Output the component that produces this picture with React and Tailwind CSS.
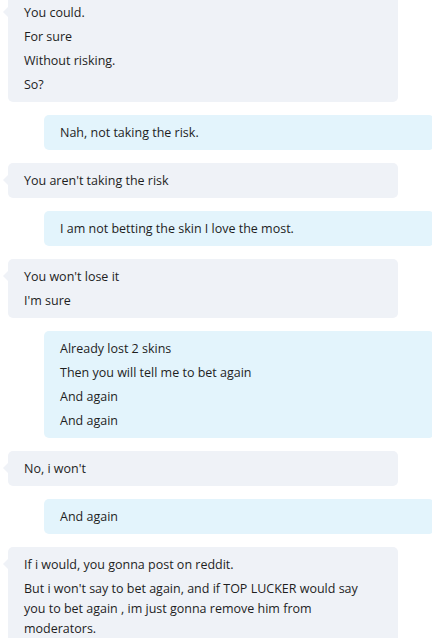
import React from "react";

const messages = [
  { me: false, lines: ["You could.", "For sure", "Without risking.", "So?"] },
  { me: true, lines: ["Nah, not taking the risk."] },
  { me: false, lines: ["You aren't taking the risk"] },
  { me: true, lines: ["I am not betting the skin I love the most."] },
  { me: false, lines: ["You won't lose it", "I'm sure"] },
  { me: true, lines: ["Already lost 2 skins", "Then you will tell me to bet again", "And again", "And again"] },
  { me: false, lines: ["No, i won't"] },
  { me: true, lines: ["And again"] },
  {
    me: false,
    lines: [
      "If i would, you gonna post on reddit.",
      "But i won't say to bet again, and if TOP LUCKER would say you to bet again , im just gonna remove him from moderators.",
    ],
  },
];

function Bubble({ me, lines }) {
  return (
    <div
      className={`relative w-[390px] shrink-0 rounded-[5px] pl-4 pr-4 pt-2 pb-[7px] flex flex-col gap-1 ${
        me ? "ml-[44px] bg-[#e3f4fc]" : "ml-[8px] bg-[#eff2f7]"
      }`}
    >
      {!me && (
        <div className="absolute left-[-5px] top-[12px] w-0 h-0 border-y-[5px] border-y-transparent border-r-[5px] border-r-[#eff2f7]" />
      )}
      {lines.map((l, i) => (
        <p key={i} className="leading-5">
          {l}
        </p>
      ))}
    </div>
  );
}

export default function App() {
  return (
    <div
      className="h-[638px] w-[432px] overflow-hidden bg-white text-[12.5px] text-[#1e1e1e]"
      style={{ fontFamily: '"Open Sans", "Noto Sans", sans-serif' }}
    >
      <div className="-mt-[5px] flex flex-col gap-[13px]">
        {messages.map((m, i) => (
          <Bubble key={i} {...m} />
        ))}
      </div>
    </div>
  );
}
